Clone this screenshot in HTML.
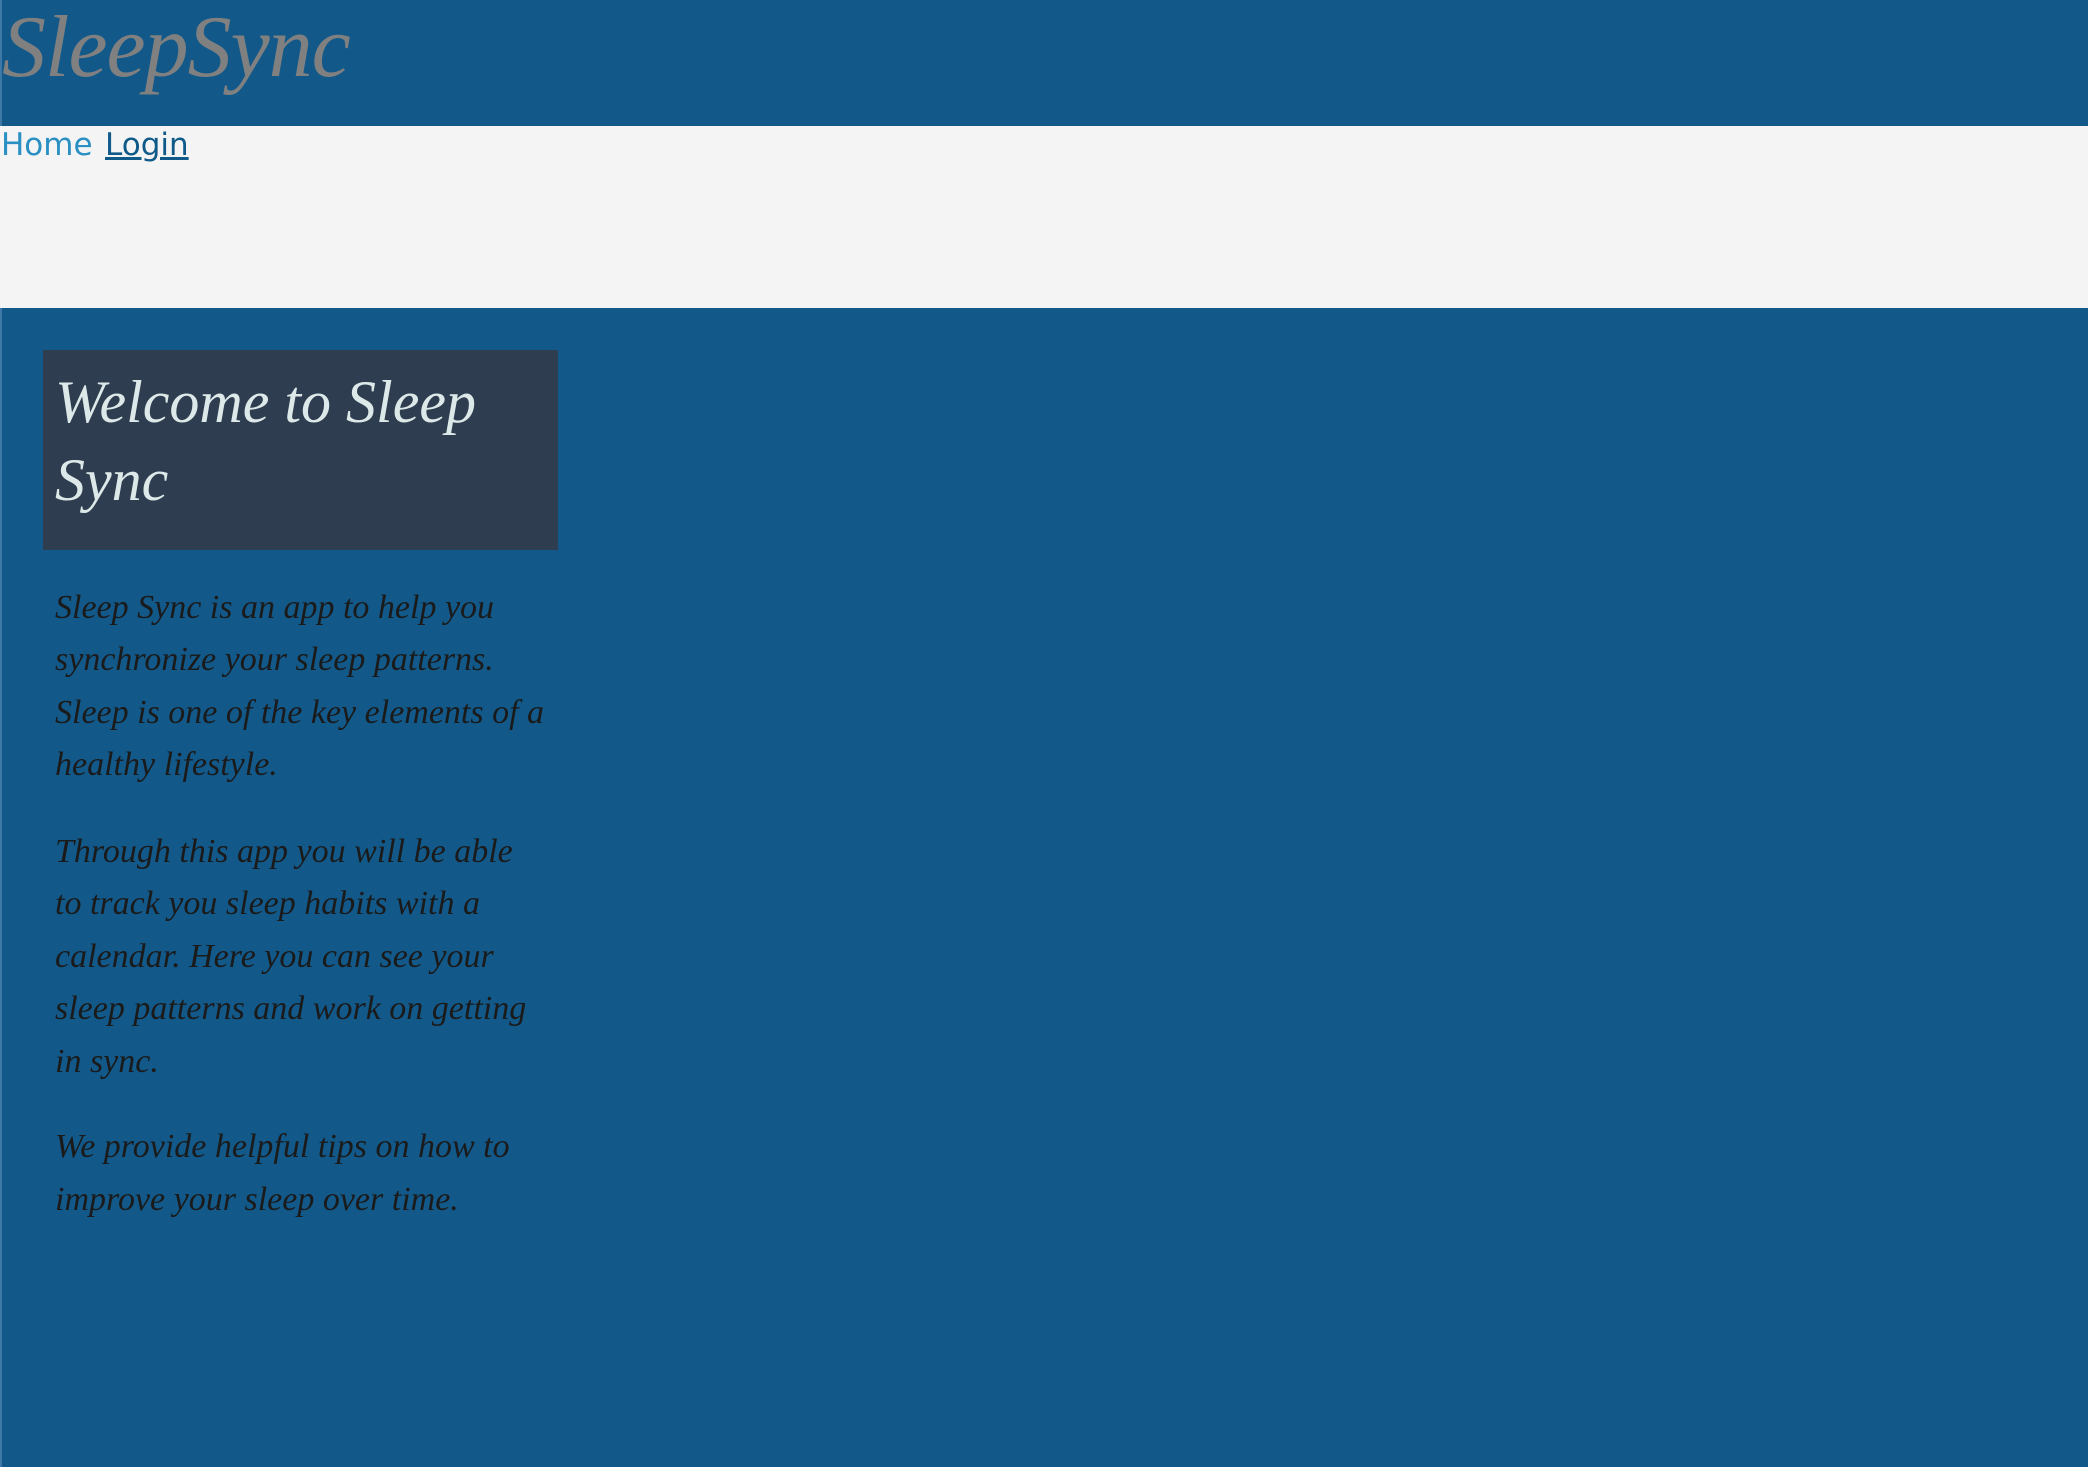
<!DOCTYPE html>
<html><head><meta charset="utf-8"><style>
html,body{margin:0;padding:0;width:2088px;height:1467px;overflow:hidden;background:#12598a;}
body{position:relative;font-family:"Liberation Serif",serif;}
.hdr{position:absolute;left:0;top:0;width:2088px;height:126px;background:#12598a;border-left:2px solid #3d78a6;box-sizing:border-box;}
.nav{position:absolute;left:0;top:126px;width:2088px;height:182px;background:#f4f4f4;}
.edge{position:absolute;left:0;top:308px;width:2px;height:1159px;background:#3d78a6;}
.t{position:absolute;white-space:nowrap;line-height:1;}
.title{left:2px;top:4px;font-size:88px;font-style:italic;color:#808080;letter-spacing:-1px;}
.navt{font-family:"DejaVu Sans",sans-serif;font-size:31px;top:130px;}
.box{position:absolute;left:43px;top:350px;width:515px;height:200px;background:#2e3d4f;}
.h{font-size:60px;font-style:italic;color:#dde9e9;left:55px;}
.p{font-size:34px;font-style:italic;color:#1a1a1a;left:55px;}
</style></head><body>
<div class="hdr"></div>
<div class="t title">SleepSync</div>
<div class="nav"></div>
<div class="t navt" style="left:1px;color:#2a8fc3;">Home</div>
<div class="t navt" style="left:105px;color:#0f5a88;text-decoration:underline;">Login</div>
<div class="edge"></div>
<div class="box"></div>
<div class="t h" style="top:372px">Welcome to Sleep</div>
<div class="t h" style="top:450px">Sync</div>
<div class="t p" style="top:591px">Sleep Sync is an app to help you</div>
<div class="t p" style="top:643px">synchronize your sleep patterns.</div>
<div class="t p" style="top:696px">Sleep is one of the key elements of a</div>
<div class="t p" style="top:748px">healthy lifestyle.</div>
<div class="t p" style="top:835px">Through this app you will be able</div>
<div class="t p" style="top:887px">to track you sleep habits with a</div>
<div class="t p" style="top:940px">calendar. Here you can see your</div>
<div class="t p" style="top:992px">sleep patterns and work on getting</div>
<div class="t p" style="top:1045px">in sync.</div>
<div class="t p" style="top:1130px">We provide helpful tips on how to</div>
<div class="t p" style="top:1183px">improve your sleep over time.</div>
</body></html>
